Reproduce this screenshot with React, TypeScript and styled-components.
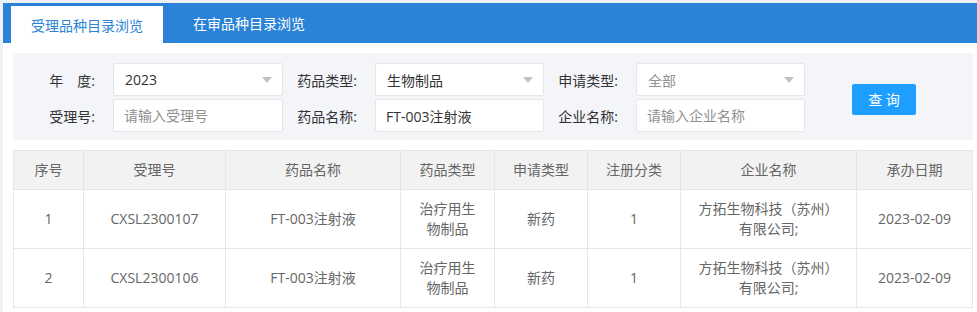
import React from "react";
import styled, { createGlobalStyle } from "styled-components";

const GlobalStyle = createGlobalStyle`
  html, body {
    margin: 0;
    padding: 0;
    background: #eef1f6;
    font-family: "Open Sans", "Noto Sans CJK SC", sans-serif;
    font-size: 14px;
  }
  * { box-sizing: border-box; }
`;

type Row = {
    no: number;
    acceptNo: string;
    name: string;
    kind: string;
    applyType: string;
    regClass: string;
    company: string;
    date: string;
};

const rows: Row[] = [
    {
        no: 1,
        acceptNo: "CXSL2300107",
        name: "FT-003注射液",
        kind: "治疗用生物制品",
        applyType: "新药",
        regClass: "1",
        company: "方拓生物科技（苏州）有限公司;",
        date: "2023-02-09",
    },
    {
        no: 2,
        acceptNo: "CXSL2300106",
        name: "FT-003注射液",
        kind: "治疗用生物制品",
        applyType: "新药",
        regClass: "1",
        company: "方拓生物科技（苏州）有限公司;",
        date: "2023-02-09",
    },
];

const columns = [
    { title: "序号", width: 70 },
    { title: "受理号", width: 142 },
    { title: "药品名称", width: 175 },
    { title: "药品类型", width: 94 },
    { title: "申请类型", width: 93 },
    { title: "注册分类", width: 93 },
    { title: "企业名称", width: 176 },
    { title: "承办日期", width: 116 },
];

const App = () => {
    return (
        <>
            <GlobalStyle />
            <StyledPage>
                <StyledTabBar>
                    <StyledTab active>受理品种目录浏览</StyledTab>
                    <StyledTab active={false}>在审品种目录浏览</StyledTab>
                </StyledTabBar>
                <StyledContent>
                    <StyledFilter>
                        <StyledFields>
                            <StyledLabel>年　度:</StyledLabel>
                            <StyledSelect>
                                <StyledValue muted={false}>2023</StyledValue>
                                <StyledArrow />
                            </StyledSelect>
                            <StyledLabel>药品类型:</StyledLabel>
                            <StyledSelect>
                                <StyledValue muted={false}>生物制品</StyledValue>
                                <StyledArrow />
                            </StyledSelect>
                            <StyledLabel>申请类型:</StyledLabel>
                            <StyledSelect>
                                <StyledValue muted>全部</StyledValue>
                                <StyledArrow />
                            </StyledSelect>

                            <StyledLabel>受理号:</StyledLabel>
                            <StyledInput placeholder="请输入受理号" />
                            <StyledLabel>药品名称:</StyledLabel>
                            <StyledInput defaultValue="FT-003注射液" />
                            <StyledLabel>企业名称:</StyledLabel>
                            <StyledInput placeholder="请输入企业名称" />
                        </StyledFields>
                        <StyledButton>查 询</StyledButton>
                    </StyledFilter>

                    <StyledTable>
                        <colgroup>
                            {columns.map((c) => (
                                <col key={c.title} style={{ width: c.width }} />
                            ))}
                        </colgroup>
                        <thead>
                            <tr>
                                {columns.map((c) => (
                                    <StyledTh key={c.title}>{c.title}</StyledTh>
                                ))}
                            </tr>
                        </thead>
                        <tbody>
                            {rows.map((r) => (
                                <tr key={r.no}>
                                    <StyledTd>{r.no}</StyledTd>
                                    <StyledTd>{r.acceptNo}</StyledTd>
                                    <StyledTd>{r.name}</StyledTd>
                                    <StyledTd>{r.kind}</StyledTd>
                                    <StyledTd>{r.applyType}</StyledTd>
                                    <StyledTd>{r.regClass}</StyledTd>
                                    <StyledTd>{r.company}</StyledTd>
                                    <StyledTd>{r.date}</StyledTd>
                                </tr>
                            ))}
                        </tbody>
                    </StyledTable>
                </StyledContent>
            </StyledPage>
        </>
    );
};
export default App;

const StyledPage = styled.div({
    marginTop: 3,
    marginLeft: 3,
    background: "#ffffff",
    minHeight: "calc(100vh - 3px)",
});

const StyledTabBar = styled.div({
    display: "flex",
    alignItems: "flex-end",
    height: 40,
    paddingLeft: 8,
    background: "#2a83d6",
});

const StyledTab = styled.div<{ active: boolean }>(({ active }) => ({
    height: active ? 37 : 40,
    display: "flex",
    alignItems: "center",
    padding: active ? "0 20px" : "0 20px 0 30px",
    fontSize: 14,
    color: active ? "#2a83d6" : "#ffffff",
    background: active ? "#ffffff" : "transparent",
    cursor: "pointer",
}));

const StyledContent = styled.div({
    padding: "10px 4px 0 10px",
});

const StyledFilter = styled.div({
    display: "flex",
    alignItems: "center",
    background: "#f4f5f9",
    padding: "10px 0 8px 8px",
});

const StyledFields = styled.div({
    display: "grid",
    gridTemplateColumns: "92px 170px 92px 169px 92px 169px",
    rowGap: 3,
    alignItems: "center",
});

const StyledLabel = styled.label({
    textAlign: "right",
    paddingRight: 18,
    fontSize: 14,
    color: "#333333",
    whiteSpace: "nowrap",
});

const StyledSelect = styled.div({
    position: "relative",
    height: 33,
    display: "flex",
    alignItems: "center",
    padding: "0 11px",
    background: "#ffffff",
    border: "1px solid #e6e6e6",
    borderRadius: 2,
});

const StyledValue = styled.span<{ muted: boolean }>(({ muted }) => ({
    fontSize: 14,
    color: muted ? "#909090" : "#333333",
}));

const StyledArrow = styled.i({
    position: "absolute",
    right: 10,
    top: "50%",
    marginTop: -3,
    width: 0,
    height: 0,
    borderStyle: "solid",
    borderWidth: "6px 5px 0 5px",
    borderColor: "#c2c2c2 transparent transparent transparent",
});

const StyledInput = styled.input({
    height: 33,
    width: "100%",
    padding: "0 10px",
    border: "1px solid #e6e6e6",
    borderRadius: 2,
    background: "#ffffff",
    fontFamily: "inherit",
    fontSize: 14,
    color: "#333333",
    outline: "none",
    ["&::placeholder"]: {
        color: "#909090",
    },
});

const StyledButton = styled.button({
    marginLeft: 47,
    marginTop: 3,
    width: 64,
    height: 31,
    border: "none",
    borderRadius: 2,
    background: "#1e9fff",
    color: "#ffffff",
    fontFamily: "inherit",
    fontSize: 14,
    cursor: "pointer",
});

const StyledTable = styled.table({
    marginTop: 10,
    width: 960,
    tableLayout: "fixed",
    borderCollapse: "collapse",
    color: "#666666",
    fontSize: 14,
});

const StyledTh = styled.th({
    background: "#f2f2f2",
    border: "1px solid #e6e6e6",
    padding: "9px 15px",
    lineHeight: "20px",
    fontWeight: 400,
    textAlign: "center",
});

const StyledTd = styled.td({
    border: "1px solid #e6e6e6",
    padding: "9px 15px",
    lineHeight: "20px",
    textAlign: "center",
    verticalAlign: "middle",
});
